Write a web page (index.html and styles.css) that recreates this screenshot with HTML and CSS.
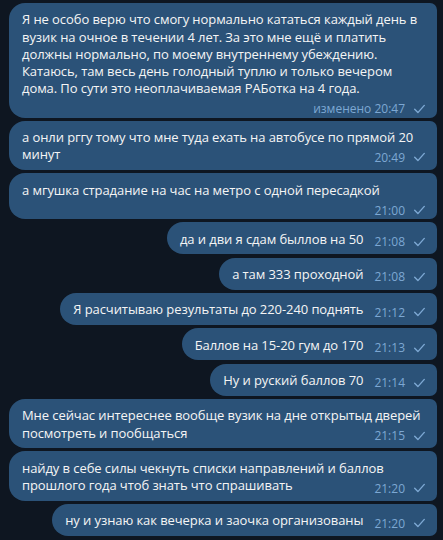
FILE: index.html
```html
<!DOCTYPE html>
<html lang="ru">
<head>
<meta charset="utf-8">
<link rel="stylesheet" href="styles.css">
</head>
<body>
<div class="chat">
  <div class="bubble">Я не особо верю что смогу нормально кататься каждый день в вузик на очное в течении 4 лет. За это мне ещё и платить должны нормально, по моему внутреннему убеждению. Катаюсь, там весь день голодный туплю и только вечером дома. По сути это неоплачиваемая РАБотка на 4 года. <span class="meta"><span class="time">изменено 20:47</span><svg class="check" viewBox="0 0 11 10"><path d="M0.7 5.3 L3.9 8.6 L10.3 1.4"/></svg></span></div>
  <div class="bubble">а онли рггу тому что мне туда ехать на автобусе по прямой 20 минут <span class="meta"><span class="time">20:49</span><svg class="check" viewBox="0 0 11 10"><path d="M0.7 5.3 L3.9 8.6 L10.3 1.4"/></svg></span></div>
  <div class="bubble">а мгушка страдание на час на метро с одной пересадкой <span class="meta"><span class="time">21:00</span><svg class="check" viewBox="0 0 11 10"><path d="M0.7 5.3 L3.9 8.6 L10.3 1.4"/></svg></span></div>
  <div class="bubble">да и дви я сдам быллов на 50 <span class="meta"><span class="time">21:08</span><svg class="check" viewBox="0 0 11 10"><path d="M0.7 5.3 L3.9 8.6 L10.3 1.4"/></svg></span></div>
  <div class="bubble">а там 333 проходной <span class="meta"><span class="time">21:08</span><svg class="check" viewBox="0 0 11 10"><path d="M0.7 5.3 L3.9 8.6 L10.3 1.4"/></svg></span></div>
  <div class="bubble">Я расчитываю результаты до 220-240 поднять <span class="meta"><span class="time">21:12</span><svg class="check" viewBox="0 0 11 10"><path d="M0.7 5.3 L3.9 8.6 L10.3 1.4"/></svg></span></div>
  <div class="bubble">Баллов на 15-20 гум до 170 <span class="meta"><span class="time">21:13</span><svg class="check" viewBox="0 0 11 10"><path d="M0.7 5.3 L3.9 8.6 L10.3 1.4"/></svg></span></div>
  <div class="bubble">Ну и руский баллов 70 <span class="meta"><span class="time">21:14</span><svg class="check" viewBox="0 0 11 10"><path d="M0.7 5.3 L3.9 8.6 L10.3 1.4"/></svg></span></div>
  <div class="bubble">Мне сейчас интереснее вообще вузик на дне открытыд дверей посмотреть и пообщаться <span class="meta"><span class="time">21:15</span><svg class="check" viewBox="0 0 11 10"><path d="M0.7 5.3 L3.9 8.6 L10.3 1.4"/></svg></span></div>
  <div class="bubble">найду в себе силы чекнуть списки направлений и баллов прошлого года чтоб знать что спрашивать <span class="meta"><span class="time">21:20</span><svg class="check" viewBox="0 0 11 10"><path d="M0.7 5.3 L3.9 8.6 L10.3 1.4"/></svg></span></div>
  <div class="bubble">ну и узнаю как вечерка и заочка организованы <span class="meta"><span class="time">21:20</span><svg class="check" viewBox="0 0 11 10"><path d="M0.7 5.3 L3.9 8.6 L10.3 1.4"/></svg></span></div>
</div>
</body>
</html>
```
FILE: styles.css
```css
html, body {
  margin: 0;
  padding: 0;
  background: #0e1621;
}
body {
  width: 443px;
  height: 540px;
  overflow: hidden;
  font-family: "Open Sans", "Noto Sans", sans-serif;
}
.chat {
  display: flex;
  flex-direction: column;
  align-items: flex-end;
  gap: 3.3px;
  padding: 3px 6px 0 9px;
}
.bubble {
  display: flow-root;
  max-width: 100%;
  box-sizing: border-box;
  background: #2b5278;
  color: #f5f5f5;
  font-size: 13px;
  letter-spacing: -0.08px;
  line-height: 17.25px;
  padding: 8.4px 12px 6.4px 13px;
  border-radius: 16px 7px 7px 16px;
}
.meta {
  float: right;
  display: flex;
  align-items: center;
  gap: 9px;
  margin: 4.5px 0 -4px 11px;
  line-height: 13px;
  font-size: 12px;
  letter-spacing: 0;
  color: #7da8d3;
  white-space: nowrap;
}
.check {
  width: 11px;
  height: 10px;
  fill: none;
  stroke: #7da8d3;
  stroke-width: 1.4;
  stroke-linecap: round;
  stroke-linejoin: round;
}
```
